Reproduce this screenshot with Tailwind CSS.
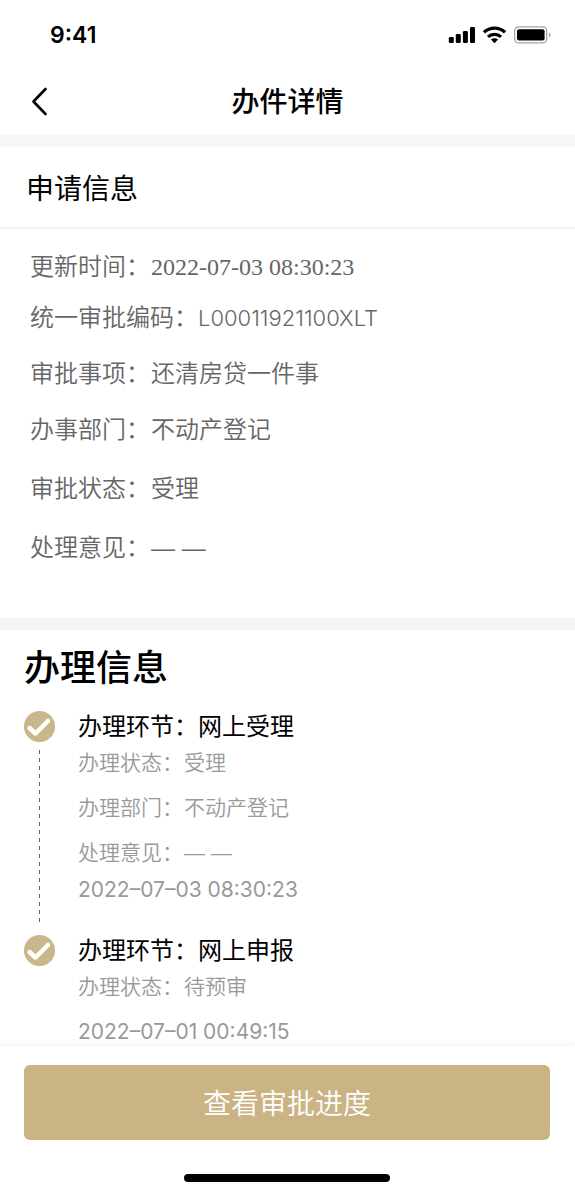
<!DOCTYPE html>
<html lang="zh-CN">
<head>
    <meta charset="UTF-8">
    <meta name="viewport" content="width=device-width, initial-scale=1.0">
    <title>办件详情</title>
    <script src="https://cdn.jsdelivr.net/npm/@tailwindcss/browser@4"></script>
</head>
<body class="bg-white text-black font-['Liberation_Sans','Noto_Sans_CJK_SC',sans-serif]">
    <div class="min-h-screen flex flex-col">
        <header>
            <!-- Status bar -->
            <div class="h-[68px] pt-0.5 pl-[50px] pr-6 flex items-center justify-between">
                <span class="font-['Inter',sans-serif] text-[23px] font-semibold">9:41</span>
                <div class="flex items-center gap-2">
                    <svg class="w-[27px] h-[18px]" viewBox="0 0 27 18" aria-hidden="true">
                        <rect x=".8" y="11" width="5" height="6" rx="1.3"/>
                        <rect x="7.8" y="8" width="5" height="9" rx="1.3"/>
                        <rect x="14.900" y="5" width="5" height="12" rx="1.3"/>
                        <rect x="22" y="1" width="5" height="16" rx="1.3"/>
                    </svg>
                    <svg class="w-[23px] h-[18px]" viewBox="0 0 23 18" fill="none" stroke="#000" stroke-width="3.2" aria-hidden="true">
                        <path d="M1 6.300a15.200 15.200 0 0 1 21 0"/>
                        <path d="M5 10.900a9.500 9.500 0 0 1 13 0"/>
                        <path d="M11.500 17.200l-3.500-3.600a5 5 0 0 1 7 0z" fill="#000" stroke="none"/>
                    </svg>
                    <svg class="w-[37px] h-[18px]" viewBox="0 0 37 18" aria-hidden="true">
                        <rect x=".7" y=".9" width="32" height="16" rx="4" fill="none" stroke="#a3a3a3" stroke-width="1.3"/>
                        <rect x="3" y="3.200" width="27.600" height="11.400" rx="2"/>
                        <path d="M35 6.500v5c1-.4 1.600-1.400 1.600-2.500s-.6-2.100-1.600-2.500z" fill="#a3a3a3"/>
                    </svg>
                </div>
            </div>
            <!-- Nav bar -->
            <div class="h-[67px] px-6 grid grid-cols-[32px_1fr_32px] items-center">
                <button type="button" aria-label="返回" class="w-8 h-8 flex items-center justify-center">
                    <svg class="w-8 h-8" viewBox="0 0 32 32" fill="none" stroke="#000" stroke-width="2.6" stroke-linecap="round" stroke-linejoin="round">
                        <path d="M21.500 3L9.500 15.500l12 12.500"/>
                    </svg>
                </button>
                <h1 class="pt-0.5 text-[28px] font-medium text-center">办件详情</h1>
            </div>
        </header>

        <main class="flex-1">
            <section class="border-t-12 border-[#f8f8f8]">
                <h2 class="h-[82px] px-[26px] pt-1.5 flex items-center text-[28px] border-b-2 border-[#f3f3f3]">申请信息</h2>
                <dl class="px-[30px] pt-5 pb-[52px] text-2xl/9 font-[350] text-[#666]">
                    <div class="flex gap-px">
                        <dt>更新时间：</dt>
                        <dd class="font-['Liberation_Serif',serif]">2022-07-03 08:30:23</dd>
                    </div>
                    <div class="flex mt-[15px]">
                        <dt>统一审批编码：</dt>
                        <dd class="font-['Inter',sans-serif] text-[22px]/9">L00011921100XLT</dd>
                    </div>
                    <div class="flex gap-px mt-5">
                        <dt>审批事项：</dt>
                        <dd>还清房贷一件事</dd>
                    </div>
                    <div class="flex gap-px mt-5">
                        <dt>办事部门：</dt>
                        <dd>不动产登记</dd>
                    </div>
                    <div class="flex gap-px mt-[23px]">
                        <dt>审批状态：</dt>
                        <dd>受理</dd>
                    </div>
                    <div class="flex gap-px mt-[23px]">
                        <dt>处理意见：</dt>
                        <dd>— —</dd>
                    </div>
                </dl>
            </section>

            <section class="border-t-12 border-[#f4f4f4] px-6 pt-[14px]">
                <h2 class="text-4xl/[50px] font-medium">办理信息</h2>
                <ol class="mt-[15px]">
                    <li class="flex gap-[23px]">
                        <div class="flex flex-col items-center pt-0.5">
                            <svg class="w-[31px] h-[31px]" viewBox="0 0 31 31" fill="none" aria-hidden="true">
                                <circle cx="15.500" cy="15.500" r="15.500" fill="#c8b78a"/>
                                <path d="M5.500 17l6 5.500L24 10" stroke="#fff" stroke-width="4.500" stroke-linecap="round" stroke-linejoin="round"/>
                            </svg>
                            <div class="flex-1 w-px mt-2 mb-[7px] bg-[repeating-linear-gradient(#666_0_4px,transparent_4px_8px)]"></div>
                        </div>
                        <div class="pb-[29px]">
                            <h3 class="text-2xl/9">办理环节：网上受理</h3>
                            <dl class="text-[21px]/9 font-[350] text-[#999]">
                                <div class="flex gap-px">
                                    <dt>办理状态：</dt>
                                    <dd>受理</dd>
                                </div>
                                <div class="flex gap-px mt-[9px]">
                                    <dt>办理部门：</dt>
                                    <dd>不动产登记</dd>
                                </div>
                                <div class="flex gap-px mt-[9px]">
                                    <dt>处理意见：</dt>
                                    <dd>— —</dd>
                                </div>
                            </dl>
                            <p class="mt-[5px] font-['Inter',sans-serif] text-[21px]/7 text-[#999]">2022–07–03 08:30:23</p>
                        </div>
                    </li>
                    <li class="flex gap-[23px]">
                        <div class="pt-0.5">
                            <svg class="w-[31px] h-[31px]" viewBox="0 0 31 31" fill="none" aria-hidden="true">
                                <circle cx="15.500" cy="15.500" r="15.500" fill="#c8b78a"/>
                                <path d="M5.500 17l6 5.500L24 10" stroke="#fff" stroke-width="4.500" stroke-linecap="round" stroke-linejoin="round"/>
                            </svg>
                        </div>
                        <div>
                            <h3 class="text-2xl/9">办理环节：网上申报</h3>
                            <dl class="text-[21px]/9 font-[350] text-[#999]">
                                <div class="flex gap-px">
                                    <dt>办理状态：</dt>
                                    <dd>待预审</dd>
                                </div>
                            </dl>
                            <p class="mt-[13px] font-['Inter',sans-serif] text-[21px]/7 text-[#999]">2022–07–01 00:49:15</p>
                        </div>
                    </li>
                </ol>
            </section>
        </main>

        <!-- Bottom action -->
        <footer class="sticky bottom-0 bg-white pl-6 pr-[25px] pt-[19px] pb-[13px] shadow-[0_-2px_6px_rgba(0,0,0,0.06)]">
            <button type="button" class="w-full h-[75px] pt-1 rounded-md bg-[#cab484] text-white text-[28px] font-[350]">查看审批进度</button>
            <div class="mt-[34px] mx-auto w-[206px] h-2 rounded-full bg-black"></div>
        </footer>
    </div>
</body>
</html>
